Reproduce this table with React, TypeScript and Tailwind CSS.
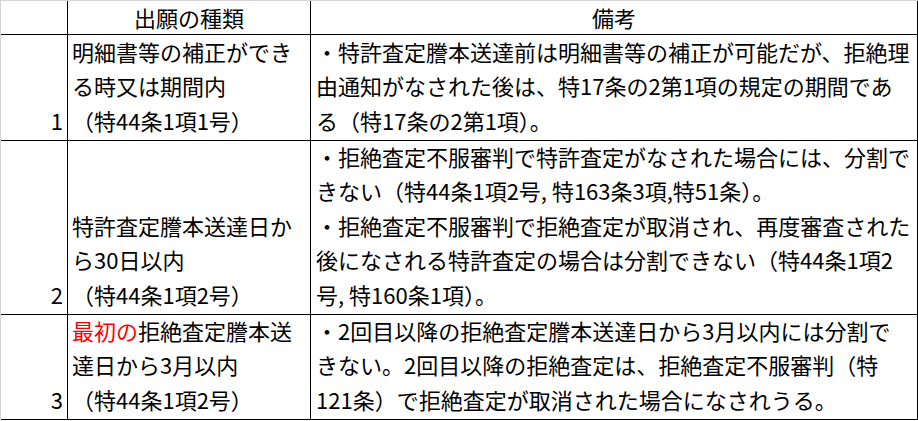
import type { ReactNode } from "react"

interface Row {
  no: string
  kind: ReactNode[]
  notes: string[]
}

const ROWS: Row[] = [
  {
    no: "1",
    kind: ["明細書等の補正ができ", "る時又は期間内", "（特44条1項1号）"],
    notes: [
      "・特許査定謄本送達前は明細書等の補正が可能だが、拒絶理",
      "由通知がなされた後は、特17条の2第1項の規定の期間であ",
      "る（特17条の2第1項）。",
    ],
  },
  {
    no: "2",
    kind: ["特許査定謄本送達日か", "ら30日以内", "（特44条1項2号）"],
    notes: [
      "・拒絶査定不服審判で特許査定がなされた場合には、分割で",
      "きない（特44条1項2号, 特163条3項,特51条）。",
      "・拒絶査定不服審判で拒絶査定が取消され、再度審査された",
      "後になされる特許査定の場合は分割できない（特44条1項2",
      "号, 特160条1項）。",
    ],
  },
  {
    no: "3",
    kind: [
      <>
        <span className="text-[#ff0000]">最初の</span>拒絶査定謄本送
      </>,
      "達日から3月以内",
      "（特44条1項2号）",
    ],
    notes: [
      "・2回目以降の拒絶査定謄本送達日から3月以内には分割で",
      "きない。2回目以降の拒絶査定は、拒絶査定不服審判（特",
      "121条）で拒絶査定が取消された場合になされうる。",
    ],
  },
]

// bottom-aligned cell, like a spreadsheet
const cell = "flex flex-col justify-end border-r border-b border-black pb-[3px] whitespace-nowrap"

export default function App() {
  return (
    <div className="w-[918px] h-[421px] bg-white text-black font-['Noto_Sans_CJK_JP',sans-serif] text-[22px] leading-[34.5px]">
      <div className="grid grid-cols-[67px_243px_607px] grid-rows-[34px_106px_174px_105px] border-t border-l border-[#d4d4d4]">
        <div className="border-r border-b border-black" />
        <div className="flex items-center justify-center border-r border-b border-black">出願の種類</div>
        <div className="flex items-center justify-center border-r border-b border-black">備考</div>

        {ROWS.map((row) => (
          <div key={row.no} className="contents">
            <div className={`${cell} items-end pr-[4px]`}>
              <div>{row.no}</div>
            </div>
            <div className={`${cell} pl-[4px]`}>
              {row.kind.map((line, i) => (
                <div key={i}>{line}</div>
              ))}
            </div>
            <div className={`${cell} pl-[5px]`}>
              {row.notes.map((line, i) => (
                <div key={i}>{line}</div>
              ))}
            </div>
          </div>
        ))}
      </div>
    </div>
  )
}
